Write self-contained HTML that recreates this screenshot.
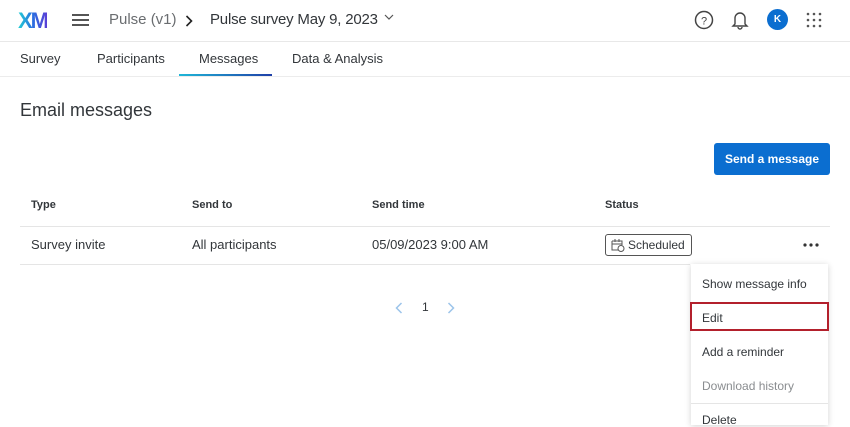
<!DOCTYPE html>
<html><head><style>
*{margin:0;padding:0;box-sizing:border-box}
body{width:850px;height:425px;overflow:hidden;background:#fff;font-family:"Liberation Sans",sans-serif;color:#32363a;position:relative}
.a{position:absolute;white-space:nowrap}
</style></head><body>
<div class="a" style="left:18px;top:8px;font-size:22px;font-weight:bold;letter-spacing:-2px;background:linear-gradient(90deg,#21d0d4,#2a6fe0,#5a3fd6);-webkit-background-clip:text;color:transparent">XM</div>
<div class="a" style="left:72px;top:14px;width:17px;height:2px;background:#555;box-shadow:0 5px 0 #555,0 10px 0 #555"></div>
<div class="a" style="left:109px;top:11px;font-size:15px;color:#6a6d70">Pulse (v1)</div>
<svg class="a" style="left:185px;top:15px" width="8" height="12"><path d="M1.5 1l5 5-5 5" fill="none" stroke="#222" stroke-width="1.6"/></svg>
<div class="a" style="left:210px;top:11px;font-size:15px;color:#32363a;letter-spacing:-0.2px">Pulse survey May 9, 2023<svg style="margin-left:6px;vertical-align:3px" width="10" height="7"><path d="M1 1l4 4 4-4" fill="none" stroke="#555" stroke-width="1.2"/></svg></div>
<svg class="a" style="left:694px;top:10px" width="20" height="20"><circle cx="10" cy="10" r="8.5" fill="none" stroke="#444" stroke-width="1.5"/><text x="10" y="14.5" font-size="11" text-anchor="middle" fill="#444" font-family="Liberation Sans">?</text></svg>
<svg class="a" style="left:731px;top:10px" width="18" height="20"><path d="M4 14V8a5 5 0 0 1 10 0v6l2 2H2z M7 17a2 2 0 0 0 4 0" fill="none" stroke="#444" stroke-width="1.4"/></svg>
<div class="a" style="left:767px;top:9px;width:21px;height:21px;border-radius:50%;background:#0b6ed0;color:#fff;font-size:10px;font-weight:bold;text-align:center;line-height:21px">K</div>
<svg class="a" style="left:806px;top:12px" width="18" height="18"><g fill="#555"><circle cx="2" cy="2" r="1.3"/><circle cx="8" cy="2" r="1.3"/><circle cx="14" cy="2" r="1.3"/><circle cx="2" cy="8" r="1.3"/><circle cx="8" cy="8" r="1.3"/><circle cx="14" cy="8" r="1.3"/><circle cx="2" cy="14" r="1.3"/><circle cx="8" cy="14" r="1.3"/><circle cx="14" cy="14" r="1.3"/></g></svg>
<div class="a" style="left:0;top:41px;width:850px;height:1px;background:#e8e8e8"></div>
<div class="a" style="left:20px;top:51px;font-size:13px">Survey</div>
<div class="a" style="left:97px;top:51px;font-size:13px">Participants</div>
<div class="a" style="left:199px;top:51px;font-size:13px">Messages</div>
<div class="a" style="left:292px;top:51px;font-size:13px">Data &amp; Analysis</div>
<div class="a" style="left:179px;top:74px;width:93px;height:2px;background:linear-gradient(90deg,#1fb7d8,#1f3fa8)"></div>
<div class="a" style="left:0;top:76px;width:850px;height:1px;background:#ececec"></div>
<div class="a" style="left:20px;top:100px;font-size:18px">Email messages</div>
<div class="a" style="left:714px;top:143px;width:116px;height:32px;background:#0b6ed0;border-radius:3px;color:#fff;font-size:12px;font-weight:bold;text-align:center;line-height:32px">Send a message</div>
<div class="a" style="left:31px;top:199px;font-size:11px;font-weight:bold">Type</div>
<div class="a" style="left:192px;top:199px;font-size:11px;font-weight:bold">Send to</div>
<div class="a" style="left:372px;top:199px;font-size:11px;font-weight:bold">Send time</div>
<div class="a" style="left:605px;top:199px;font-size:11px;font-weight:bold">Status</div>
<div class="a" style="left:20px;top:226px;width:810px;height:1px;background:#e5e5e5"></div>
<div class="a" style="left:31px;top:237px;font-size:13px">Survey invite</div>
<div class="a" style="left:192px;top:237px;font-size:13px">All participants</div>
<div class="a" style="left:372px;top:237px;font-size:13px">05/09/2023 9:00 AM</div>
<div class="a" style="left:605px;top:234px;width:87px;height:22px;border:1px solid #555;border-radius:3px;font-size:12px;padding-left:22px;line-height:20px">Scheduled</div>
<svg class="a" style="left:611px;top:238px" width="14" height="14"><path d="M1 3h10v4M1 3v9h6M1 6h10M4 1v3M8 1v3" fill="none" stroke="#555" stroke-width="1"/><circle cx="10" cy="10.5" r="3" fill="none" stroke="#555"/></svg>
<svg class="a" style="left:802px;top:242px" width="18" height="6"><g fill="#333"><circle cx="3" cy="3" r="1.6"/><circle cx="9" cy="3" r="1.6"/><circle cx="15" cy="3" r="1.6"/></g></svg>
<div class="a" style="left:20px;top:264px;width:670px;height:1px;background:#e5e5e5"></div>
<svg class="a" style="left:395px;top:302px" width="8" height="12"><path d="M6.5 1l-5 5 5 5" fill="none" stroke="#9cc4ea" stroke-width="1.5"/></svg>
<div class="a" style="left:422px;top:300px;font-size:12px">1</div>
<svg class="a" style="left:447px;top:302px" width="8" height="12"><path d="M1.5 1l5 5-5 5" fill="none" stroke="#9cc4ea" stroke-width="1.5"/></svg>
<div class="a" style="left:691px;top:264px;width:137px;height:161px;background:#fff;box-shadow:0 1px 6px rgba(0,0,0,.18)"></div>
<div class="a" style="left:702px;top:277px;font-size:12px">Show message info</div>
<div class="a" style="left:690px;top:302px;width:139px;height:29px;border:2px solid #b3202c"></div>
<div class="a" style="left:702px;top:311px;font-size:12px">Edit</div>
<div class="a" style="left:702px;top:345px;font-size:12px">Add a reminder</div>
<div class="a" style="left:702px;top:379px;font-size:12px;color:#8a8d90">Download history</div>
<div class="a" style="left:691px;top:403px;width:137px;height:1px;background:#e5e5e5"></div>
<div class="a" style="left:702px;top:413px;font-size:12px">Delete</div>
</body></html>
